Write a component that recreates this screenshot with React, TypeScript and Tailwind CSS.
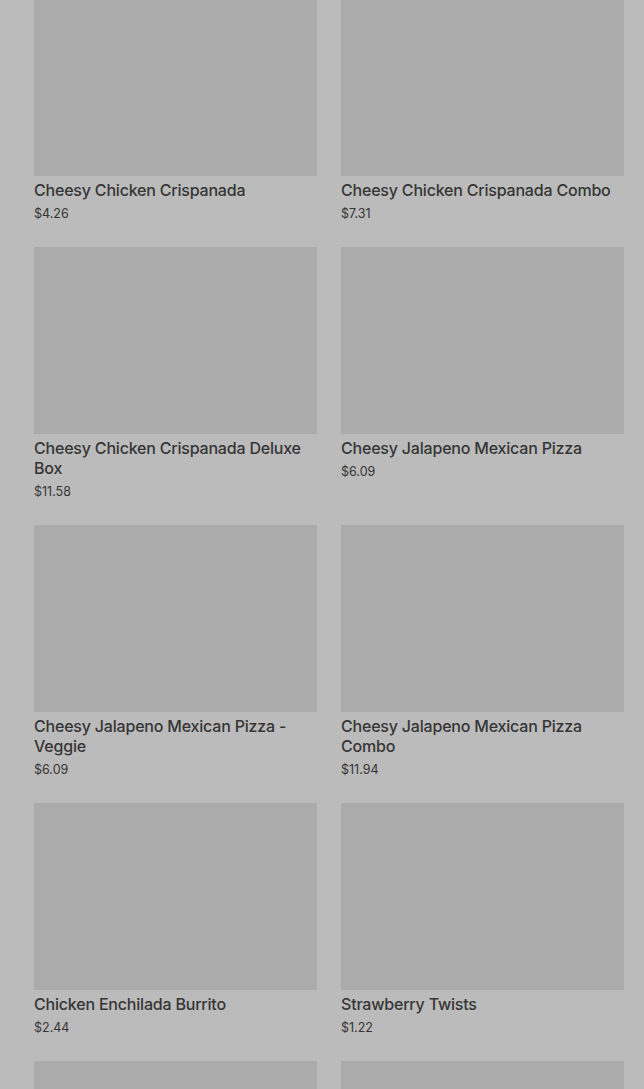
import React from "react";

interface itemProps {
  name: string;
  price: string;
}

const items: itemProps[] = [
  { name: "Cheesy Chicken Crispanada", price: "$4.26" },
  { name: "Cheesy Chicken Crispanada Combo", price: "$7.31" },
  { name: "Cheesy Chicken Crispanada Deluxe Box", price: "$11.58" },
  { name: "Cheesy Jalapeno Mexican Pizza", price: "$6.09" },
  { name: "Cheesy Jalapeno Mexican Pizza - Veggie", price: "$6.09" },
  { name: "Cheesy Jalapeno Mexican Pizza Combo", price: "$11.94" },
  { name: "Chicken Enchilada Burrito", price: "$2.44" },
  { name: "Strawberry Twists", price: "$1.22" },
  { name: "Cheesy Fiesta Potatoes", price: "$2.99" },
  { name: "Chicken Quesadilla", price: "$6.49" },
];

function ItemCard({ item }: { item: itemProps }) {
  return (
    <div className="flex flex-col">
      <div className="h-[187px] w-full bg-[#ababab]" />
      <p className="mt-1 text-[16px] leading-5 font-medium tracking-[-0.2px] text-[#353535]">{item.name}</p>
      <p className="mt-1 text-[12.5px] leading-5 text-[#353535]">{item.price}</p>
    </div>
  );
}

export default function App() {
  return (
    <div
      className="min-h-[1089px] w-full bg-[#bbbbbb] overflow-hidden"
      style={{ fontFamily: "Inter, 'Noto Sans', sans-serif" }}
    >
      <div className="-mt-[11px] grid grid-cols-2 gap-x-6 gap-y-[23px] pl-[34px] pr-5">
        {items.map((item) => (
          <ItemCard key={item.name} item={item} />
        ))}
      </div>
    </div>
  );
}
